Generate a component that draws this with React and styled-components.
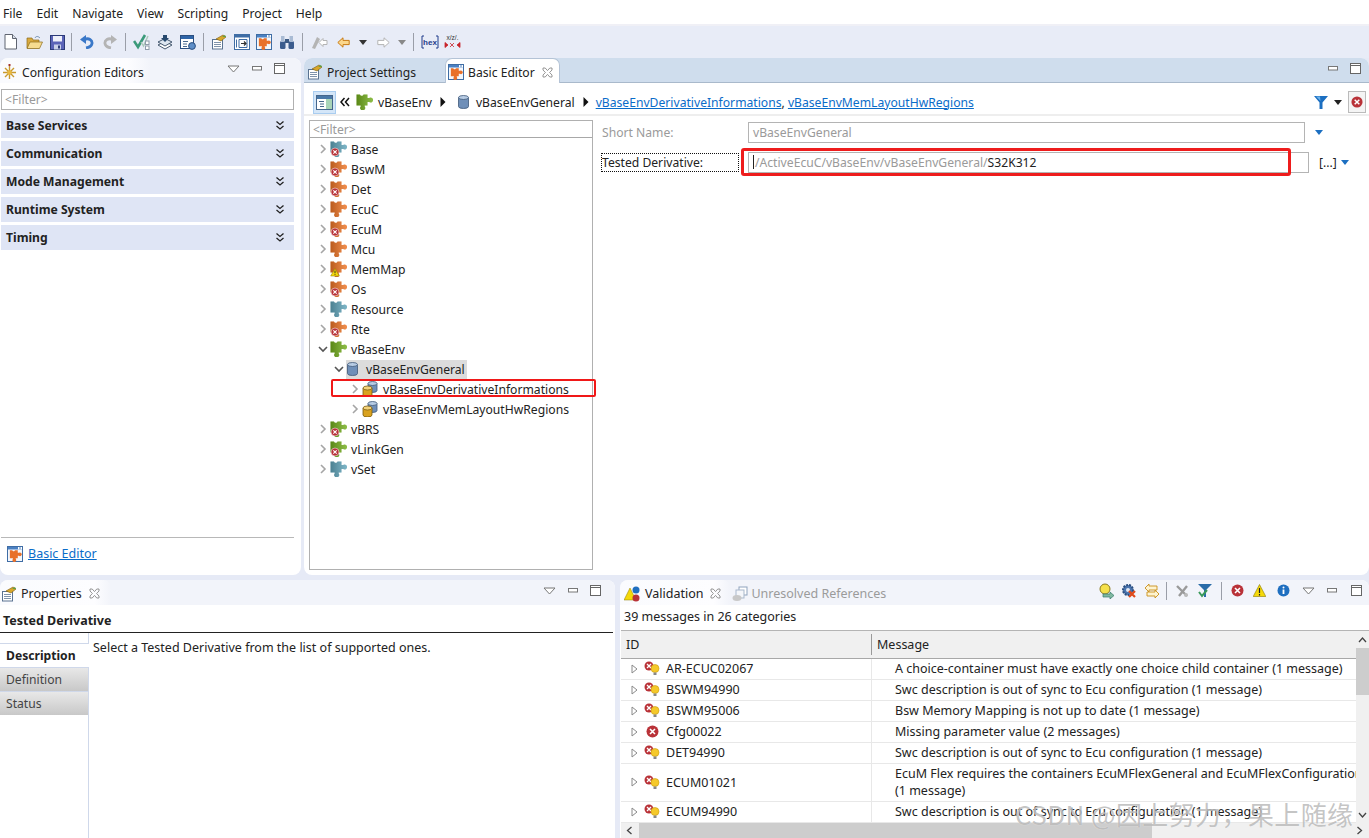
import React from "react";
import styled, { createGlobalStyle } from "styled-components";

const Global = createGlobalStyle`
  html, body { margin: 0; padding: 0; background: #e6eaf6; }
  body { font-family: "Noto Sans", "Liberation Sans", sans-serif; font-size: 12.15px; color: #222; }
  * { box-sizing: border-box; }
`;

const Page = styled.div`
  position: relative; width: 1369px; height: 838px; overflow: hidden;
  display: flex; flex-direction: column; background: #e6eaf6;
`;
const MenuBar = styled.div`
  height: 26px; background: #fff; display: flex; align-items: center; gap: 14px;
  padding: 3px 0 0 3px; border-bottom: 2px solid #f0f0f6;
`;
const MenuItem = styled.span`color: #222;`;
const ToolBar = styled.div`
  height: 32px; display: flex; align-items: center; background: #e8ecf7;
`;
const Tool = styled.span`
  width: ${p => p.$w || 23}px; height: 24px; display: flex; align-items: center; justify-content: center; flex: none;
`;
const ToolSep = styled.span`width: 1px; height: 18px; background: #9a9ea8; margin: 0 4px; flex: none;`;
const TopRow = styled.div`height: 517px; display: flex; gap: 3px; flex: none;`;
const BottomRow = styled.div`flex: 1; display: flex; gap: 5px; margin-top: 5px; min-height: 0; font-size: 12.5px;`;

const Panel = styled.section`
  width: ${p => p.$w ? p.$w + "px" : "auto"}; flex: ${p => p.$w ? "none" : "1"}; min-width: 0;
  background: #fff; border-radius: 8px 8px ${p => p.$flatBottom ? "0 0" : "8px 8px"}; overflow: hidden;
  display: flex; flex-direction: column; position: relative;
`;
const TabBar = styled.div`
  height: 25px; flex: none; display: flex; align-items: stretch; padding-right: ${p => p.$pr ?? 7}px;
  background: ${p => p.$blue ? "#cfdded" : "#f2f4fa"};
  border-bottom: ${p => p.$blue ? "1px solid #a9b9cb" : "0"};
`;
const Tab = styled.div`
  display: flex; align-items: center; gap: ${p => p.$gap ?? 4}px; padding: ${p => p.$pt ?? 2}px ${p => p.$pr ?? 8}px 0 ${p => p.$pl ?? 2}px; white-space: nowrap;
  width: ${p => p.$w ? p.$w + "px" : "auto"}; flex: none;
  color: ${p => p.$dim ? "#9b9b9b" : "#222"};
  background: ${p => p.$on ? "#fff" : p.$fade ? "linear-gradient(90deg,#fafbfe,#fdfdff 85%,#f2f4fa)" : "transparent"};
  border-radius: ${p => p.$on || p.$fade ? "7px 7px 0 0" : "0"};
  margin-bottom: ${p => p.$on ? "-1px" : "0"};
  border: ${p => p.$on ? "1px solid #b4c3d6" : "0"};
  border-bottom: 0;
`;
const TabSpacer = styled.div`flex: 1;`;
const TabActions = styled.div`display: flex; align-items: center; gap: ${p => p.$gap ?? 0}px; padding-bottom: 4px;`;
const Act = styled.span`display: flex; align-items: center; margin-left: ${p => p.$ml}px; flex: none;`;
const ActSep = styled.span`width: 1px; height: 18px; background: #9a9ea8; margin-left: ${p => p.$ml}px; flex: none;`;

const FilterInput = styled.div`
  height: 21px; margin: 6px 7px 3px 1px; border: 1px solid #b0b0b0; color: #9a9a9a; padding: 0 3px;
  display: flex; align-items: center; flex: none;
`;
const Sections = styled.div`display: flex; flex-direction: column; gap: 3px; padding: 0 7px 0 1px;`;
const SectionHead = styled.div`
  height: 25px; background: #dfe5f5; display: flex; align-items: center; justify-content: space-between;
  padding: 0 9px 0 5px; font-weight: 700; color: #222;
`;
const LeftFill = styled.div`flex: 1;`;
const LeftFoot = styled.div`
  height: 38px; margin: 0 7px 0 1px; border-top: 1px solid #b8b8b8; display: flex; align-items: center; gap: 5px; padding: 0 0 6px 6px; flex: none; font-size: 12.5px;
`;
const Link = styled.a`color: #0a6cc9; text-decoration: underline; cursor: pointer;`;

const Breadcrumb = styled.div`
  height: 33px; flex: none; display: flex; align-items: center; padding: 7px 0 0 9px; border-bottom: 2px solid #eeeeee;
`;
const CrumbBtn = styled.span`
  width: 23px; height: 23px; background: #d4e6f8; border: 1px solid #a9cdf0; display: flex; align-items: center; justify-content: center; margin-right: 4px;
`;
const Crumb = styled.span`display: inline-flex; align-items: center; gap: ${p => p.$gap ?? 5}px; margin-right: ${p => p.$mr ?? 8}px; white-space: nowrap;`;
const CrumbEnd = styled.span`margin-left: auto; display: flex; align-items: center; gap: 6px; padding-right: 3px;`;
const ErrBtn = styled.span`
  width: 18px; height: 22px; border: 1px solid #bbb; background: #f4f4f4; display: flex; align-items: center; justify-content: center;
`;
const EditorBody = styled.div`flex: 1; display: flex; padding: 4px 0 5px 5px; min-height: 0;`;
const TreeBox = styled.div`width: 284px; flex: none; border: 1px solid #b0b0b0; display: flex; flex-direction: column;`;
const TreeFilter = styled.div`
  height: 17px; border-bottom: 1px solid #a8a8a8; color: #9a9a9a; padding: 0 3px; display: flex; align-items: center; margin-bottom: 1px; flex: none;
`;
const TreeRow = styled.div`
  height: 20px; display: flex; align-items: center; padding-left: ${p => 7 + p.$depth * 16}px; position: relative; flex: none; white-space: nowrap;
`;
const TreeLabel = styled.span`
  display: inline-flex; align-items: center; gap: ${p => p.$gap ?? 4}px; height: 19px; padding-right: ${p => p.$sel ? 2 : 0}px; background: ${p => p.$sel ? "#dcdcdc" : "transparent"};
`;
const RowMark = styled.span`
  position: absolute; left: 21px; top: 0; width: 265px; height: 18px; border: 2px solid #f01818; border-radius: 2px; pointer-events: none;
`;
const FormArea = styled.div`flex: 1; padding: 0 0 0 9px; min-width: 0;`;
const FormRow = styled.div`
  height: ${p => p.$h}px; display: flex; align-items: center; position: relative;
`;
const FormLabel = styled.span`
  width: 136px; flex: none; height: 17px; margin-right: 10px; display: flex; align-items: center; white-space: nowrap;
  color: ${p => p.$dim ? "#9a9a9a" : "#222"}; outline: ${p => p.$focus ? "1px dotted #111" : "0"};
`;
const FieldInput = styled.div`
  width: ${p => p.$w}px; height: 21px; border: 1px solid #b4b4b4; padding: 0 4px; display: flex; align-items: center; color: #9a9a9a; flex: none; white-space: nowrap;
`;
const Caret = styled.span`width: 1px; height: 14px; background: #222; margin-right: 1px;`;
const DarkText = styled.span`color: #222;`;
const RedBox = styled.span`
  position: absolute; left: 139px; top: 3px; width: 550px; height: 28px; border: 3px solid #ee1c1c; border-radius: 3px; pointer-events: none;
`;
const MoreBtn = styled.span`margin: 0 4px 0 10px; color: #222; display: inline-flex;`;

const PropTitle = styled.div`
  height: 28px; flex: none; font-weight: 700; display: flex; align-items: center; padding: 4px 0 0 3px; border-bottom: 1px solid #222; margin-right: 2px;
`;
const PropBody = styled.div`flex: 1; display: flex; min-height: 0;`;
const SideTabs = styled.div`
  width: 89px; flex: none; border-right: 1px solid #cfd8ea; padding-top: 10px; display: flex; flex-direction: column; font-size: 12.15px;
`;
const SideTab = styled.div`
  height: 24px; display: flex; align-items: center; padding-left: 6px; border-top: 1px solid #cfd8ea;
  ${p => p.$on ? "font-weight:700;background:#fff;margin-right:-1px;" : "color:#444;background:linear-gradient(#e8e8e8,#c8c8c8);"}
`;
const PropText = styled.div`padding: 6px 0 0 4px;`;

const CountLine = styled.div`height: 25px; flex: none; padding: 0 0 3px 4px; display: flex; align-items: center;`;
const TableWrap = styled.div`flex: 1; display: flex; flex-direction: column; min-height: 0; margin-left: 1px; border-top: 1px solid #b4b4b4;`;
const TableMain = styled.div`flex: 1; display: flex; min-height: 0;`;
const Table = styled.div`flex: 1; min-width: 0; overflow: hidden;`;
const HeadRow = styled.div`
  height: 28px; display: grid; grid-template-columns: 250px 1fr; background: #f0f0f0; border-bottom: 1px solid #a8a8a8; align-items: center;
`;
const HeadCell = styled.div`
  height: 21px; display: flex; align-items: center; padding-left: ${p => p.$pl}px; border-left: ${p => p.$line ? "1px solid #9a9a9a" : "0"};
`;
const Row = styled.div`
  height: ${p => p.$tall ? 38 : 21}px; display: grid; grid-template-columns: 250px 1fr; border-bottom: 1px solid #e8e8e8; align-items: center;
`;
const IdCell = styled.div`display: flex; align-items: center; padding: 0 0 1px 10px; gap: 6px; white-space: nowrap;`;
const Msg = styled.div`
  border-left: 1px solid #e8e8e8; height: 100%; display: flex; align-items: center; padding: 0 0 2px 23px; line-height: 17px; white-space: nowrap; overflow: hidden;
`;
const VScroll = styled.div`width: 13px; flex: none; background: #f0f0f0; display: flex; flex-direction: column; align-items: center; justify-content: space-between; position: relative; padding: 6px 0 5px;`;
const VThumb = styled.div`position: absolute; left: 0; top: 17px; width: 13px; height: 47px; background: #cdcdcd;`;
const HScroll = styled.div`height: 15px; flex: none; display: flex; background: #f0f0f0; align-items: center;`;
const HThumb = styled.div`width: 513px; height: 15px; background: #cdcdcd; margin-left: 18px; flex: none;`;
const HArrow = styled.span`position: absolute; display: flex; ${p => p.$side}: 6px;`;
const Watermark = styled.div`
  position: absolute; left: 1015px; top: 795px; font-size: 26px; letter-spacing: .4px; white-space: nowrap; color: rgba(140,140,140,.5);
  text-shadow: 0 0 1px rgba(255,255,255,.8);
  font-family: "Noto Sans CJK SC", "Noto Sans", sans-serif; pointer-events: none;
`;

/* ---------- icons ---------- */
const PUZZLE = "M.5 .5h3.500c.3 1.800 3.200 1.800 3.500 0h4v3.400H13a2.600 2.500 0 1 1 0 4.200h-1.500v3.400H8.700v1a2.500 2.500 0 1 1-4 0v-1H.5z";
const Shade = () => (
  <defs><linearGradient id="pzshade" x1="0" x2="1" y1="0" y2="0"><stop offset="0" stopColor="#000" stopOpacity=".22" /><stop offset="1" stopColor="#fff" stopOpacity=".2" /></linearGradient></defs>
);
const Puzzle = ({ color, badge }) => (
  <svg width="17" height="16" viewBox="0 0 17 16" style={{ flex: "none" }}>
    <Shade />
    <path d={PUZZLE} fill={color} />
    <path d={PUZZLE} fill="url(#pzshade)" />
    {badge === "err" && <g><circle cx="5" cy="11" r="4" fill="#b8343a" stroke="#fff" strokeWidth=".5" /><path d="M3.300 9.300l3.400 3.400M6.700 9.300l-3.400 3.400" stroke="#fff" strokeWidth="1.100" /></g>}
    {badge === "warn" && <g><path d="M5 7.500L9.300 15H.7z" fill="#f5d90a" stroke="#8a7a00" strokeWidth=".5" /><path d="M5 9.700v2.600M5 13.100v.8" stroke="#222" strokeWidth=".9" /></g>}
  </svg>
);
const Cyl = ({ x = 0, y = 0, rx = 5, h = 9, fill, top, stroke }) => (
  <g>
    <path d={`M${x} ${y + 2}v${h}a${rx} 2 0 0 0 ${2 * rx} 0v-${h}`} fill={fill} stroke={stroke} strokeWidth=".8" />
    <ellipse cx={x + rx} cy={y + 2} rx={rx} ry="2" fill={top} stroke={stroke} strokeWidth=".8" />
  </g>
);
const DbBlue = () => (
  <svg width="13" height="14" viewBox="0 0 13 14" style={{ flex: "none" }}><Cyl x={1.5} y={.5} h={9} fill="#6f8fb8" top="#b8cce4" stroke="#3f5878" /></svg>
);
const DbPair = () => (
  <svg width="17" height="16" viewBox="0 0 17 16" style={{ flex: "none" }}>
    <Cyl x={6} y={.5} rx={4.5} h={7} fill="#6f8fb8" top="#b8cce4" stroke="#3f5878" />
    <Cyl x={1} y={5} rx={4.5} h={7} fill="#d9a21f" top="#f2d27a" stroke="#7a5a10" />
  </svg>
);
const Expander = ({ open }) => (
  <svg width="12" height="12" viewBox="0 0 12 12" style={{ flex: "none", marginRight: 1 }}>
    <path d={open ? "M2 4l4 4 4-4" : "M4 2l4 4-4 4"} fill="none" stroke={open ? "#555" : "#a5a5a5"} strokeWidth="1.6" />
  </svg>
);
const DoubleChev = () => (
  <svg width="10" height="11" viewBox="0 0 10 11"><path d="M1.5 1.5L5 4.5l3.5-3M1.5 6L5 9l3.5-3" fill="none" stroke="#222" strokeWidth="1.3" /></svg>
);
const Close = ({ color = "#8a8a8a" }) => (
  <svg width="11" height="11" viewBox="0 0 11 11" style={{ flex: "none", marginLeft: 3 }}>
    <path d="M1 1h2.2L5.5 3.6 7.8 1H10v2L7.6 5.5 10 8v2H7.8L5.5 7.4 3.2 10H1V8l2.4-2.5L1 3z" fill="none" stroke={color} strokeWidth=".9" />
  </svg>
);
const ViewMenu = () => <svg width="13" height="8" viewBox="0 0 13 8"><path d="M1 1h11L6.5 7z" fill="#fff" stroke="#777" /></svg>;
const Minimize = () => <svg width="10" height="5" viewBox="0 0 10 5"><rect x=".5" y=".5" width="9" height="3.5" fill="#fff" stroke="#777" /></svg>;
const Maximize = () => <svg width="11" height="11" viewBox="0 0 11 11"><rect x=".5" y=".5" width="10" height="10" fill="#fff" stroke="#666" /><path d="M.5 2.5h10" stroke="#666" /></svg>;
const PanelActions = ({ menu = true }) => (
  <TabActions $gap={12}>{menu && <ViewMenu />}<Minimize /><Maximize /></TabActions>
);
const Sun = () => (
  <svg width="17" height="17" viewBox="0 0 17 17" style={{ flex: "none" }}>
    <g stroke="#c99a2e" strokeWidth="1.4"><path d="M8.5 2v13M2 8.5h13M4 4l9 9M13 4l-9 9" /></g>
    <circle cx="8.5" cy="8.5" r="2.2" fill="#e9b93e" /><rect x="7.5" y="0" width="2" height="2" fill="#a3342c" />
  </svg>
);
const SettingsIcon = () => (
  <svg width="16" height="16" viewBox="0 0 16 16" style={{ flex: "none" }}>
    <rect x="1.5" y="5.5" width="10" height="9.5" fill="#fff" stroke="#5a7391" />
    <path d="M3 8.5h7M3 10.5h7M3 12.5h7" stroke="#7f93ab" />
    <path d="M5 5L12 1l3 2-5 4z" fill="#d8a72a" stroke="#7a5a10" strokeWidth=".6" />
    <path d="M11 3l3-2 1 2z" fill="#5fa043" />
  </svg>
);
const BasicEdIcon = () => (
  <svg width="16" height="16" viewBox="0 0 16 16" style={{ flex: "none" }}>
    <rect x=".5" y=".5" width="15" height="15" fill="#f4f7fc" stroke="#3f6da5" />
    <rect x="1" y="1" width="14" height="2.5" fill="#4a80c2" />
    <path d="M11 1h1.5v2.5H11zM13.5 1H15v2.5h-1.5z" fill="#fff" />
    <g transform="translate(2.5,4) scale(.72)"><path d={PUZZLE} fill="#e8702a" /></g>
  </svg>
);
const ToggleIcon = () => (
  <svg width="17" height="15" viewBox="0 0 17 15">
    <rect x=".5" y=".5" width="16" height="14" fill="#fff" stroke="#44668c" /><rect x="1" y="1" width="15" height="3" fill="#4878a8" />
    <rect x="10" y="4" width="6" height="10" fill="#a8d4b8" /><path d="M3 6.5h5M4 9h4M4 11.5h4" stroke="#44668c" />
  </svg>
);
const DblLeft = () => <svg width="10" height="10" viewBox="0 0 10 10"><path d="M4.5 1L1 5l3.5 4M9 1L5.5 5 9 9" fill="none" stroke="#111" strokeWidth="1.5" /></svg>;
const ArrowR = () => <svg width="6" height="10" viewBox="0 0 6 10"><path d="M.5 0l5 5-5 5z" fill="#111" /></svg>;
const Funnel = () => (
  <svg width="14" height="14" viewBox="0 0 14 14"><path d="M0 1h14L8.5 7.5V14h-3V7.5z" fill="#1c6fc1" /><path d="M2 1.6h4L6.5 6z" fill="#6cb1ea" /></svg>
);
const SmallDown = ({ color = "#333" }) => <svg width="8" height="5" viewBox="0 0 8 5" style={{ flex: "none" }}><path d="M0 0h8L4 5z" fill={color} /></svg>;
const ErrDot = ({ size = 13 }) => (
  <svg width={size} height={size} viewBox="0 0 13 13" style={{ flex: "none" }}>
    <circle cx="6.5" cy="6.5" r="6" fill="#b93238" /><path d="M4 4l5 5M9 4l-5 5" stroke="#fff" strokeWidth="1.6" />
  </svg>
);
const WarnTri = () => (
  <svg width="13" height="13" viewBox="0 0 13 13"><path d="M6.5 .5L12.8 12.5H.2z" fill="#f5d90a" stroke="#8a7a00" strokeWidth=".6" /><path d="M6.5 4v5M6.5 10v1.5" stroke="#222" strokeWidth="1.2" /></svg>
);
const InfoDot = () => (
  <svg width="13" height="13" viewBox="0 0 13 13"><circle cx="6.5" cy="6.5" r="6" fill="#1f6fc0" /><path d="M6.5 5.5v4.5" stroke="#fff" strokeWidth="1.8" /><circle cx="6.5" cy="3.5" r="1" fill="#fff" /></svg>
);
const RowIcon = () => (
  <svg width="16" height="15" viewBox="0 0 16 15" style={{ flex: "none" }}>
    <circle cx="5" cy="5" r="4.5" fill="#b93238" /><path d="M3 3l4 4M7 3l-4 4" stroke="#fff" strokeWidth="1.3" />
    <circle cx="11" cy="7.5" r="4" fill="#f5c92a" stroke="#c79a10" strokeWidth=".6" /><rect x="9.5" y="11.5" width="3" height="2.5" fill="#888" />
  </svg>
);
const RowErrWrap = styled.span`display: flex; width: 16px; justify-content: center; flex: none;`;
const Tri = () => <svg width="7" height="10" viewBox="0 0 7 10" style={{ flex: "none" }}><path d="M1 1l5 4-5 4z" fill="#fff" stroke="#8a8a8a" /></svg>;
const ValidationIcon = () => (
  <svg width="17" height="16" viewBox="0 0 17 16" style={{ flex: "none" }}>
    <path d="M6 2L12 14H0z" fill="#f5d90a" stroke="#8a7a00" strokeWidth=".5" /><circle cx="12" cy="4" r="3.5" fill="#1f6fc0" /><circle cx="12" cy="12" r="3.5" fill="#b93238" />
  </svg>
);
const UnresolvedIcon = () => (
  <svg width="17" height="16" viewBox="0 0 17 16" style={{ flex: "none" }}>
    <rect x="7" y="1" width="8" height="8" fill="#fff" stroke="#8fa3bd" /><rect x="4" y="4" width="8" height="8" fill="#f4f6fa" stroke="#a9b8cb" /><ellipse cx="5" cy="12" rx="4.5" ry="3" fill="#c8c8c8" />
  </svg>
);

const TB = {
  New: () => <svg width="13" height="16" viewBox="0 0 13 16"><path d="M1 .5h7.500l4 4V15H1z" fill="#fff" stroke="#5f6470" /><path d="M8.500 .5v4h4" fill="#d8dde8" stroke="#5f6470" /></svg>,
  Open: () => <svg width="17" height="15" viewBox="0 0 17 15"><path d="M1 3h5l1 2h6v8H1z" fill="#d9a93e" stroke="#8a6a1a" strokeWidth=".7" /><path d="M1 13.500L4 7h12.500l-3 6.500z" fill="#f6dc90" stroke="#8a6a1a" strokeWidth=".7" /><path d="M9 3c1-2 3-2 5 0" stroke="#6b8bb0" fill="none" /></svg>,
  Save: () => <svg width="15" height="15" viewBox="0 0 15 15"><rect x=".5" y=".5" width="14" height="14" fill="#5a63b8" stroke="#2b3a78" /><rect x="3" y="1" width="9" height="5.500" fill="#eef0fa" /><rect x="4" y="9.500" width="7" height="5" fill="#c8cfe8" /><rect x="8" y="10.500" width="2" height="3" fill="#2b3a78" /></svg>,
  Undo: () => <svg width="14" height="14" viewBox="0 0 14 14"><path d="M4 4.500c5-2 8.500 .5 8 4-.4 2.500-3 4-6 4.500" fill="none" stroke="#3a78c8" strokeWidth="2.800" /><path d="M0 4.500L6 0v9z" fill="#3a78c8" /></svg>,
  Redo: () => <svg width="14" height="14" viewBox="0 0 14 14"><path d="M10 4.500c-5-2-8.500 .5-8 4 .4 2.500 3 4 6 4.500" fill="none" stroke="#b4b4b4" strokeWidth="2.800" /><path d="M14 4.500L8 0v9z" fill="#b4b4b4" /></svg>,
  Check: () => <svg width="17" height="16" viewBox="0 0 17 16"><path d="M1 7l4 6L12 1" fill="none" stroke="#3b9a7a" strokeWidth="2.600" /><path d="M8 8l2.500 4L15 2" fill="none" stroke="#a9c8b8" strokeWidth="1.400" /><rect x="12.500" y="7" width="3.500" height="3.500" fill="#fff" stroke="#8f9caa" /><rect x="12.500" y="12" width="3.500" height="3.500" fill="#fff" stroke="#8f9caa" /></svg>,
  Stack: () => <svg width="16" height="16" viewBox="0 0 16 16"><path d="M1 11l7-3.500 7 3.500-7 4z" fill="#fff" stroke="#44586f" /><path d="M1 8l7-3.500L15 8l-7 4z" fill="#dde6f0" stroke="#44586f" /><path d="M6 1h4v3h2L8 8 4 4h2z" fill="#27496e" /></svg>,
  Win: () => <svg width="16" height="15" viewBox="0 0 16 15"><rect x=".5" y=".5" width="13" height="13" fill="#fff" stroke="#2b4f80" /><rect x="1" y="1" width="12" height="3" fill="#2f65a8" /><path d="M3 6.500h5M3 9h4M3 11.500h4" stroke="#4a6a90" /><circle cx="12" cy="11" r="3.400" fill="#5f8fc8" stroke="#2b4f80" /></svg>,
  Ref: () => <svg width="16" height="16" viewBox="0 0 16 16"><rect x=".5" y=".5" width="15" height="15" fill="#fff" stroke="#3f6da5" /><rect x="1" y="1" width="14" height="2.500" fill="#3f6da5" /><path d="M2.500 5.500v8M5 5.500h8v8H5z" fill="none" stroke="#3f6da5" /><path d="M7 9.500h5M10 7.500l2 2-2 2" fill="none" stroke="#333" strokeWidth="1.200" /></svg>,
  Bino: () => <svg width="16" height="15" viewBox="0 0 16 15"><rect x="1" y="6" width="5.500" height="8" rx="1.500" fill="#3b5c8e" /><rect x="9.500" y="6" width="5.500" height="8" rx="1.500" fill="#3b5c8e" /><rect x="2" y="1" width="3.500" height="6" fill="#a9bbd4" /><rect x="10.500" y="1" width="3.500" height="6" fill="#a9bbd4" /><rect x="6" y="4" width="4" height="4" fill="#3c5a84" /></svg>,
  NavEdit: () => <svg width="17" height="15" viewBox="0 0 17 15"><path d="M1 13L6 2l3 2-5 10z" fill="#b4b4b4" /><path d="M8 7.500l4-4v2h4v4h-4v2z" fill="#fff" stroke="#b4b4b4" /></svg>,
  Left: () => <svg width="13" height="11" viewBox="0 0 13 11"><path d="M.8 5.500L6 .8v2.600h6.200v4.200H6v2.600z" fill="#fbd78c" stroke="#c97a12" /></svg>,
  Right: () => <svg width="13" height="11" viewBox="0 0 13 11"><path d="M12.200 5.500L7 .8v2.600H.8v4.200H7v2.600z" fill="#fff" stroke="#b4b4b4" /></svg>,
  Hex: () => <svg width="18" height="16" viewBox="0 0 18 16"><path d="M3 2H1v12h2M15 2h2v12h-2" fill="none" stroke="#1e3a8a" strokeWidth="1" /><text x="9" y="11" textAnchor="middle" fontSize="8" fontWeight="700" fontFamily="Liberation Sans" fill="#1e3a8a">hex</text></svg>,
  Xz: () => <svg width="17" height="16" viewBox="0 0 17 16"><text x="8.500" y="6" textAnchor="middle" fontSize="6.500" fontFamily="Liberation Sans" fill="#333">x/z/.</text><path d="M1 8.500l3 2.500-3 2.500zM16 8.500l-3 2.500 3 2.500zM6 9l4 4M10 9l-4 4" fill="#c8242c" stroke="#c8242c" strokeWidth=".8" /></svg>,
};

const menu = ["File", "Edit", "Navigate", "View", "Scripting", "Project", "Help"];
const sections = ["Base Services", "Communication", "Mode Management", "Runtime System", "Timing"];
const O = "#ee7424", T = "#5fa4ba", G = "#72ad1c";
const tree = [
  { d: 0, l: "Base", c: T, b: "err" }, { d: 0, l: "BswM", c: O, b: "err" }, { d: 0, l: "Det", c: O, b: "err" },
  { d: 0, l: "EcuC", c: O }, { d: 0, l: "EcuM", c: O, b: "err" }, { d: 0, l: "Mcu", c: O },
  { d: 0, l: "MemMap", c: O, b: "warn" }, { d: 0, l: "Os", c: O, b: "err" }, { d: 0, l: "Resource", c: T },
  { d: 0, l: "Rte", c: O, b: "err" }, { d: 0, l: "vBaseEnv", c: G, open: true },
  { d: 1, l: "vBaseEnvGeneral", db: 1, open: true, sel: true },
  { d: 2, l: "vBaseEnvDerivativeInformations", db: 2, mark: true },
  { d: 2, l: "vBaseEnvMemLayoutHwRegions", db: 2 },
  { d: 0, l: "vBRS", c: G, b: "err" }, { d: 0, l: "vLinkGen", c: G, b: "err" }, { d: 0, l: "vSet", c: T },
];
const rows = [
  ["AR-ECUC02067", ["A choice-container must have exactly one choice child container (1 message)"]],
  ["BSWM94990", ["Swc description is out of sync to Ecu configuration (1 message)"]],
  ["BSWM95006", ["Bsw Memory Mapping is not up to date (1 message)"]],
  ["Cfg00022", ["Missing parameter value (2 messages)"], "err"],
  ["DET94990", ["Swc description is out of sync to Ecu configuration (1 message)"]],
  ["ECUM01021", ["EcuM Flex requires the containers EcuMFlexGeneral and EcuMFlexConfiguration", "(1 message)"], "tall"],
  ["ECUM94990", ["Swc description is out of sync to Ecu configuration (1 message)"]],
];

export default function App() {
  return (
    <Page>
      <Global />
      <MenuBar>{menu.map(m => <MenuItem key={m}>{m}</MenuItem>)}</MenuBar>
      <ToolBar>
        <Tool $w={20}><TB.New /></Tool><Tool $w={28}><TB.Open /></Tool><Tool $w={19}><TB.Save /></Tool><ToolSep />
        <Tool $w={22}><TB.Undo /></Tool><Tool><TB.Redo /></Tool><ToolSep />
        <Tool><TB.Check /></Tool><Tool><TB.Stack /></Tool><Tool><TB.Win /></Tool><ToolSep />
        <Tool $w={22.5}><SettingsIcon /></Tool><Tool $w={22.5}><TB.Ref /></Tool><Tool $w={22.5}><BasicEdIcon /></Tool><Tool $w={22.5}><TB.Bino /></Tool><ToolSep />
        <Tool $w={24}><TB.NavEdit /></Tool><Tool $w={24}><TB.Left /></Tool><Tool $w={16}><SmallDown /></Tool><Tool $w={24}><TB.Right /></Tool><Tool $w={14}><SmallDown color="#888" /></Tool><ToolSep />
        <Tool><TB.Hex /></Tool><Tool><TB.Xz /></Tool>
      </ToolBar>
      <TopRow>
        <Panel $w={301}>
          <TabBar $pr={16}>
            <Tab $fade $w={150} $pl={1} $pr={0} $pt={4}><Sun />Configuration Editors</Tab>
            <TabSpacer /><PanelActions />
          </TabBar>
          <FilterInput>&lt;Filter&gt;</FilterInput>
          <Sections>
            {sections.map(s => <SectionHead key={s}>{s}<DoubleChev /></SectionHead>)}
          </Sections>
          <LeftFill />
          <LeftFoot><BasicEdIcon /><Link>Basic Editor</Link></LeftFoot>
        </Panel>
        <Panel>
          <TabBar $blue $pr={8}>
            <Tab $w={141} $pl={3} $pt={4}><SettingsIcon />Project Settings</Tab>
            <Tab $on $pl={2} $pr={6}><BasicEdIcon />Basic Editor<Close /></Tab>
            <TabSpacer /><PanelActions menu={false} />
          </TabBar>
          <Breadcrumb>
            <CrumbBtn><ToggleIcon /></CrumbBtn>
            <Crumb $mr={6}><DblLeft /></Crumb>
            <Crumb $mr={8}><Puzzle color={G} />vBaseEnv</Crumb>
            <Crumb $mr={11}><ArrowR /></Crumb>
            <Crumb $mr={8} $gap={6}><DbBlue />vBaseEnvGeneral</Crumb>
            <Crumb $mr={7}><ArrowR /></Crumb>
            <Crumb $mr={0}><Link>vBaseEnvDerivativeInformations</Link></Crumb>
            <span>,&nbsp;</span>
            <Crumb $mr={0}><Link>vBaseEnvMemLayoutHwRegions</Link></Crumb>
            <CrumbEnd><Funnel /><SmallDown color="#222" /><ErrBtn><ErrDot size={12} /></ErrBtn></CrumbEnd>
          </Breadcrumb>
          <EditorBody>
            <TreeBox>
              <TreeFilter>&lt;Filter&gt;</TreeFilter>
              {tree.map(n => (
                <TreeRow key={n.l} $depth={n.d}>
                  <Expander open={n.open} />
                  <TreeLabel $sel={n.sel} $gap={n.db === 1 ? 7 : 4}>
                    {n.db === 1 ? <DbBlue /> : n.db === 2 ? <DbPair /> : <Puzzle color={n.c} badge={n.b} />}
                    {n.l}
                  </TreeLabel>
                  {n.mark && <RowMark />}
                </TreeRow>
              ))}
            </TreeBox>
            <FormArea>
              <FormRow $h={25}><FormLabel $dim>Short Name:</FormLabel><FieldInput $w={557}>vBaseEnvGeneral</FieldInput><MoreBtn><SmallDown color="#1c6fc1" /></MoreBtn></FormRow>
              <FormRow $h={34}>
                <FormLabel $focus>Tested Derivative:</FormLabel>
                <FieldInput $w={561}><Caret />/ActiveEcuC/vBaseEnv/vBaseEnvGeneral/<DarkText>S32K312</DarkText></FieldInput>
                <MoreBtn>[...]</MoreBtn><SmallDown color="#1c6fc1" />
                <RedBox />
              </FormRow>
            </FormArea>
          </EditorBody>
        </Panel>
      </TopRow>
      <BottomRow>
        <Panel $w={615} $flatBottom>
          <TabBar $pr={14}>
            <Tab $fade $pl={1} $pr={11}><SettingsIcon />Properties<Close /></Tab>
            <TabSpacer /><PanelActions />
          </TabBar>
          <PropTitle>Tested Derivative</PropTitle>
          <PropBody>
            <SideTabs>
              <SideTab $on>Description</SideTab><SideTab>Definition</SideTab><SideTab>Status</SideTab>
            </SideTabs>
            <PropText>Select a Tested Derivative from the list of supported ones.</PropText>
          </PropBody>
        </Panel>
        <Panel $flatBottom>
          <TabBar $pr={7.5}>
            <Tab $fade $pl={4} $pr={9}><ValidationIcon />Validation<Close /></Tab>
            <Tab $dim $pl={2} $gap={2}><UnresolvedIcon />Unresolved References</Tab>
            <TabSpacer />
            <TabActions>
              <Act $ml={0}><svg width="17" height="16" viewBox="0 0 17 16"><circle cx="7" cy="6" r="5" fill="#f5e04a" stroke="#8a7a20" /><path d="M5 11h7v-2l4 3.500-4 3.500v-2H5z" fill="#7fb8a0" stroke="#3a7a6a" strokeWidth=".7" /></svg></Act>
              <Act $ml={6.5}><svg width="16" height="16" viewBox="0 0 16 16"><circle cx="7" cy="7" r="5" fill="#4a74ae" stroke="#2b4f80" strokeDasharray="2 1" strokeWidth="2" /><circle cx="7" cy="7" r="2" fill="#dfe6f2" /><path d="M8 8l6 6M14 8l-6 6" stroke="#e04a1a" strokeWidth="2.200" /></svg></Act>
              <Act $ml={7}><svg width="16" height="16" viewBox="0 0 16 16"><path d="M1 5l4-4v2h8v4H5v2zM15 11l-4 4v-2H3V9h8V7z" fill="#fdf3d0" stroke="#c9901a" strokeWidth=".9" /></svg></Act>
              <ActSep $ml={6} />
              <Act $ml={8}><svg width="16" height="16" viewBox="0 0 16 16"><path d="M2 3l10 10M12 3l-8 10" stroke="#9a9a9a" strokeWidth="2.400" /><circle cx="11" cy="12" r="2" fill="#bbb" /></svg></Act>
              <Act $ml={6}><svg width="16" height="15" viewBox="0 0 16 15"><path d="M1 1h14L9 7v7H7V7z" fill="#2a6ca8" /><path d="M2 9l3 4 5-6" stroke="#3a9a5a" fill="none" strokeWidth="2" /></svg></Act>
              <ActSep $ml={8} />
              <Act $ml={8.5}><ErrDot /></Act>
              <Act $ml={9}><WarnTri /></Act>
              <Act $ml={11}><InfoDot /></Act>
              <Act $ml={12}><ViewMenu /></Act>
              <Act $ml={12.5}><Minimize /></Act>
              <Act $ml={13.5}><Maximize /></Act>
            </TabActions>
          </TabBar>
          <CountLine>39 messages in 26 categories</CountLine>
          <TableWrap>
            <TableMain>
              <Table>
                <HeadRow><HeadCell $pl={5}>ID</HeadCell><HeadCell $pl={5} $line>Message</HeadCell></HeadRow>
                {rows.map(r => (
                  <Row key={r[0]} $tall={r[2] === "tall"}>
                    <IdCell><Tri />{r[2] === "err" ? <RowErrWrap><ErrDot /></RowErrWrap> : <RowIcon />}{r[0]}</IdCell>
                    <Msg>
                      <div>{r[1].map(line => <div key={line}>{line}</div>)}</div>
                    </Msg>
                  </Row>
                ))}
              </Table>
              <VScroll>
                <VThumb />
                <svg width="9" height="6" viewBox="0 0 9 6"><path d="M1 5l3.500-4L8 5" fill="none" stroke="#444" strokeWidth="1.300" /></svg>
                <svg width="9" height="6" viewBox="0 0 9 6"><path d="M1 1l3.500 4L8 1" fill="none" stroke="#444" strokeWidth="1.300" /></svg>
              </VScroll>
            </TableMain>
            <HScroll>
              <HArrow $side="left"><svg width="7" height="9" viewBox="0 0 7 9"><path d="M5.500 1L1.500 4.500l4 3.500" fill="none" stroke="#444" strokeWidth="1.300" /></svg></HArrow>
              <HThumb />
              <HArrow $side="right"><svg width="7" height="9" viewBox="0 0 7 9"><path d="M1.500 1l4 3.500-4 3.500" fill="none" stroke="#444" strokeWidth="1.300" /></svg></HArrow>
            </HScroll>
          </TableWrap>
        </Panel>
      </BottomRow>
      <Watermark>CSDN @因上努力，果上随缘</Watermark>
    </Page>
  );
}
